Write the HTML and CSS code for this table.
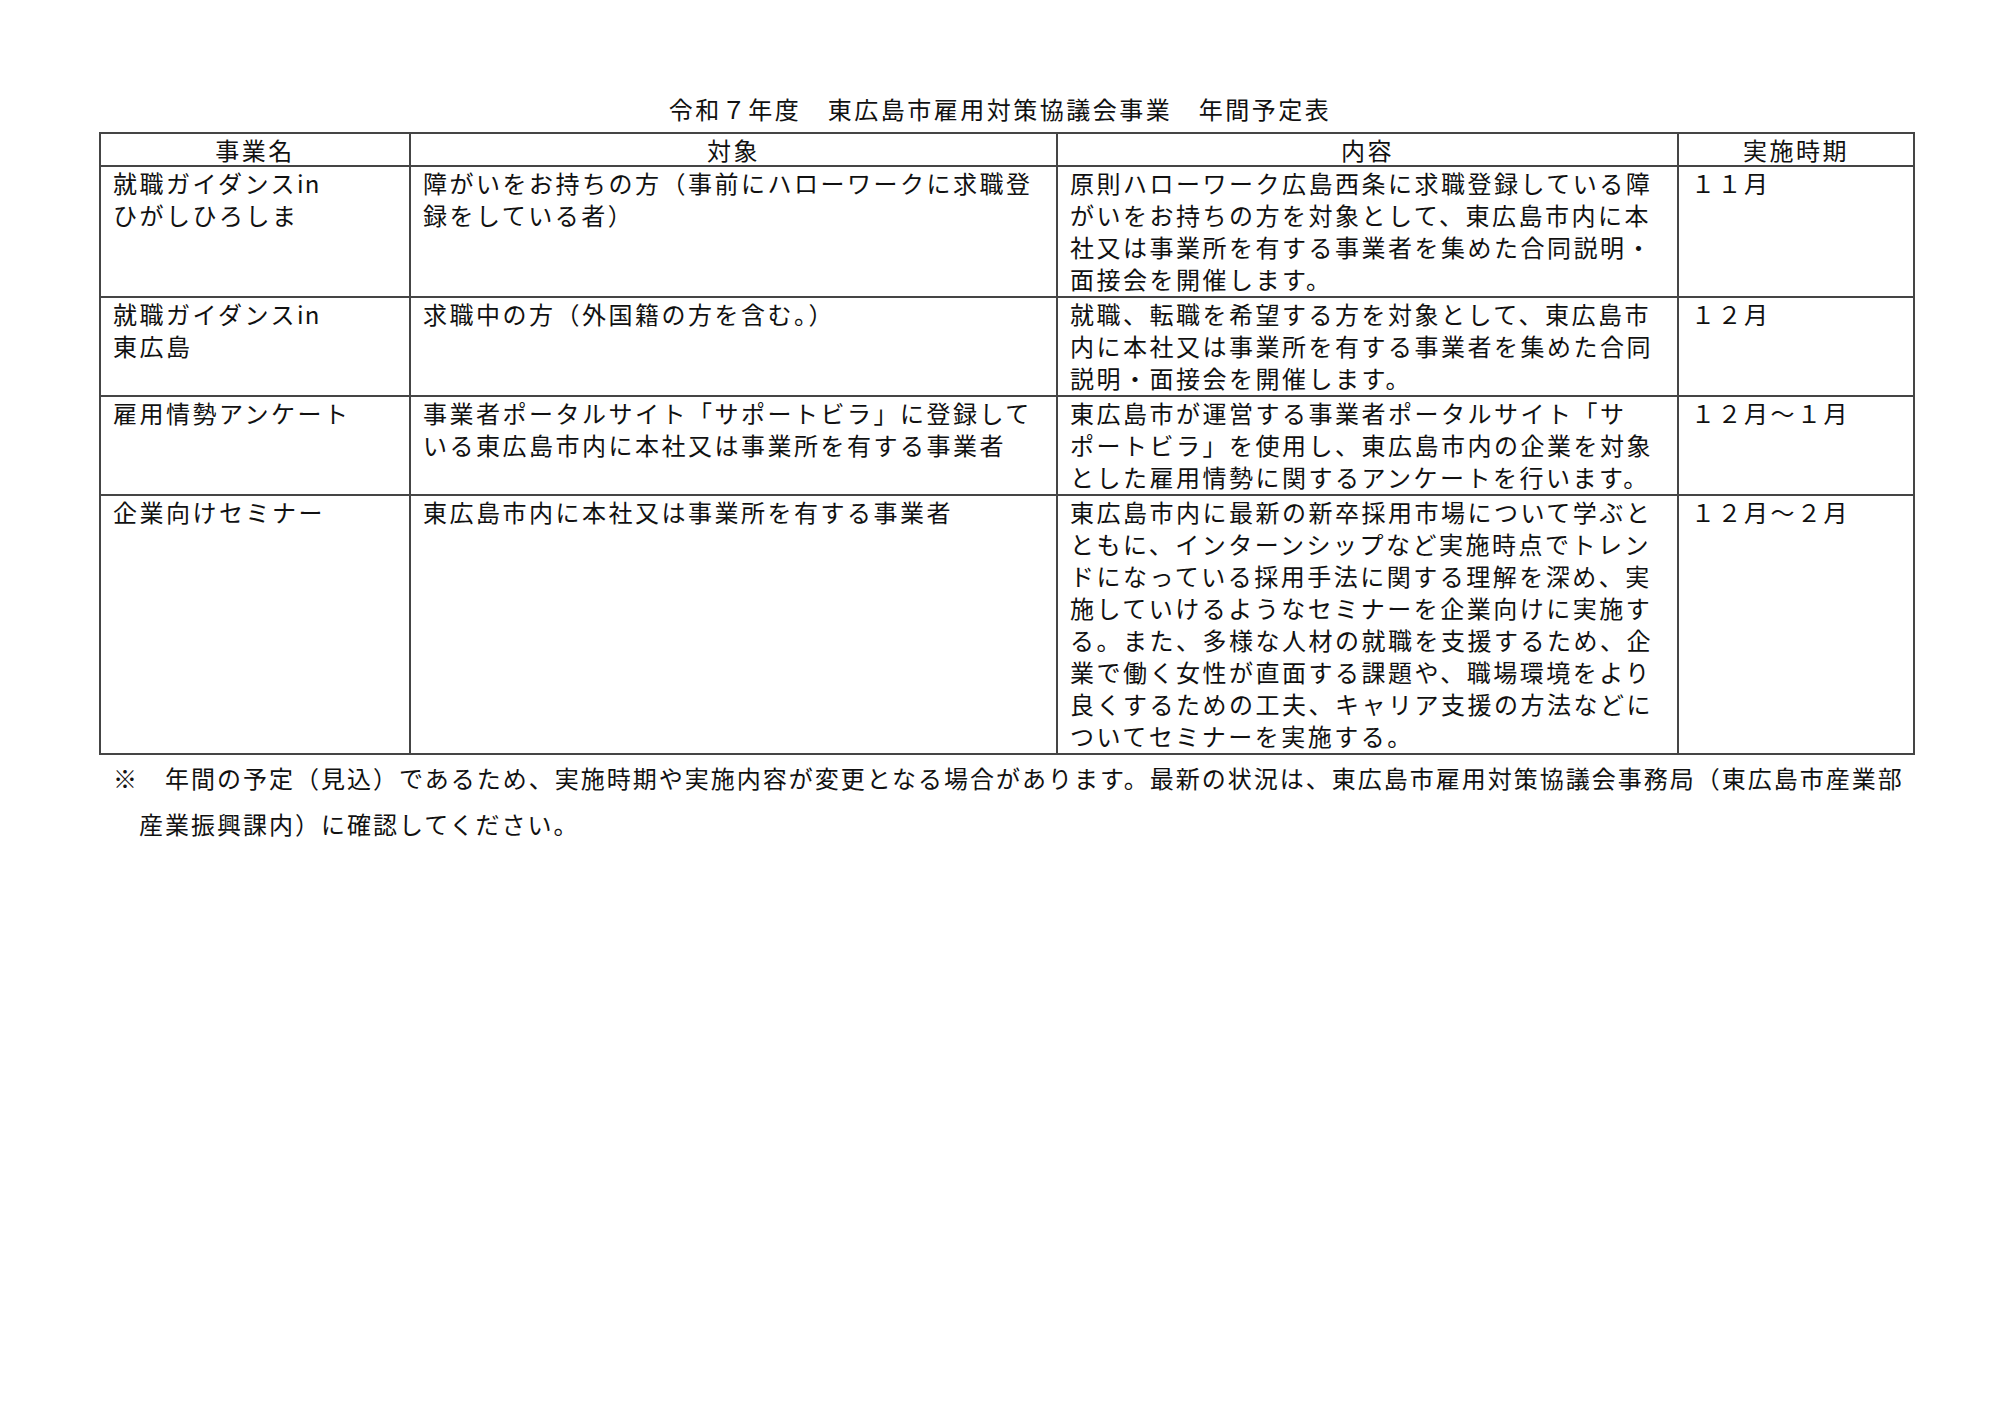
FILE: index.html
```html
<!DOCTYPE html>
<html lang="ja">
<head>
<meta charset="utf-8">
<title>令和７年度　東広島市雇用対策協議会事業　年間予定表</title>
<link rel="stylesheet" href="styles.css">
</head>
<body>
<div class="page">
  <h1 class="title">令和７年度　東広島市雇用対策協議会事業　年間予定表</h1>
  <table class="schedule">
    <colgroup>
      <col class="c-name">
      <col class="c-target">
      <col class="c-content">
      <col class="c-period">
    </colgroup>
    <thead>
      <tr>
        <th>事業名</th>
        <th>対象</th>
        <th>内容</th>
        <th>実施時期</th>
      </tr>
    </thead>
    <tbody>
      <tr>
        <td>就職ガイダンス<span class="latin">in</span><br>ひがしひろしま</td>
        <td>障がいをお持ちの方（事前にハローワークに求職登<br>録をしている者）</td>
        <td>原則ハローワーク広島西条に求職登録している障<br>がいをお持ちの方を対象として、東広島市内に本<br>社又は事業所を有する事業者を集めた合同説明・<br>面接会を開催します。</td>
        <td>１１月</td>
      </tr>
      <tr>
        <td>就職ガイダンス<span class="latin">in</span><br>東広島</td>
        <td>求職中の方（外国籍の方を含む。）</td>
        <td>就職、転職を希望する方を対象として、東広島市<br>内に本社又は事業所を有する事業者を集めた合同<br>説明・面接会を開催します。</td>
        <td>１２月</td>
      </tr>
      <tr>
        <td>雇用情勢アンケート</td>
        <td>事業者ポータルサイト「サポートビラ」に登録して<br>いる東広島市内に本社又は事業所を有する事業者</td>
        <td>東広島市が運営する事業者ポータルサイト「サ<br>ポートビラ」を使用し、東広島市内の企業を対象<br>とした雇用情勢に関するアンケートを行います。</td>
        <td>１２月～１月</td>
      </tr>
      <tr>
        <td>企業向けセミナー</td>
        <td>東広島市内に本社又は事業所を有する事業者</td>
        <td>東広島市内に最新の新卒採用市場について学ぶと<br>ともに、インターンシップなど実施時点でトレン<br>ドになっている採用手法に関する理解を深め、実<br>施していけるようなセミナーを企業向けに実施す<br>る。また、多様な人材の就職を支援するため、企<br>業で働く女性が直面する課題や、職場環境をより<br>良くするための工夫、キャリア支援の方法などに<br>ついてセミナーを実施する。</td>
        <td>１２月～２月</td>
      </tr>
    </tbody>
  </table>
  <p class="note">※　年間の予定（見込）であるため、実施時期や実施内容が変更となる場合があります。最新の状況は、東広島市雇用対策協議会事務局（東広島市産業部<br>産業振興課内）に確認してください。</p>
</div>
</body>
</html>
```

FILE: styles.css
```css
html, body {
  margin: 0;
  padding: 0;
  background: #ffffff;
}

body {
  color: #111111;
  font-family: "Noto Sans CJK JP", "Noto Sans", sans-serif;
  font-size: 24px;
  font-weight: 400;
}

.page {
  width: 2000px;
  padding-top: 93px;
}

.title {
  margin: 0 0 7px 0;
  font-size: 24px;
  font-weight: 400;
  line-height: 32px;
  letter-spacing: 2.5px;
  text-align: center;
}

.schedule {
  margin-left: 99px;
  width: 1814px;
  border-collapse: collapse;
  table-layout: fixed;
}

.c-name { width: 310px; }
.c-target { width: 647px; }
.c-content { width: 621px; }
.c-period { width: 236px; }

.schedule th,
.schedule td {
  border: 2px solid #454545;
  padding: 0 8px 1px 12px;
  line-height: 32px;
  letter-spacing: 2.5px;
  vertical-align: top;
  white-space: nowrap;
  font-weight: 400;
  text-align: left;
  overflow: visible;
}

.schedule th {
  text-align: center;
  padding: 0 10px;
  line-height: 31px;
}

.latin {
  letter-spacing: 1px;
}

.note {
  margin: 0 0 0 113px;
  padding-left: 26px;
  text-indent: -26px;
  line-height: 46px;
  letter-spacing: 2px;
  white-space: nowrap;
}
```
